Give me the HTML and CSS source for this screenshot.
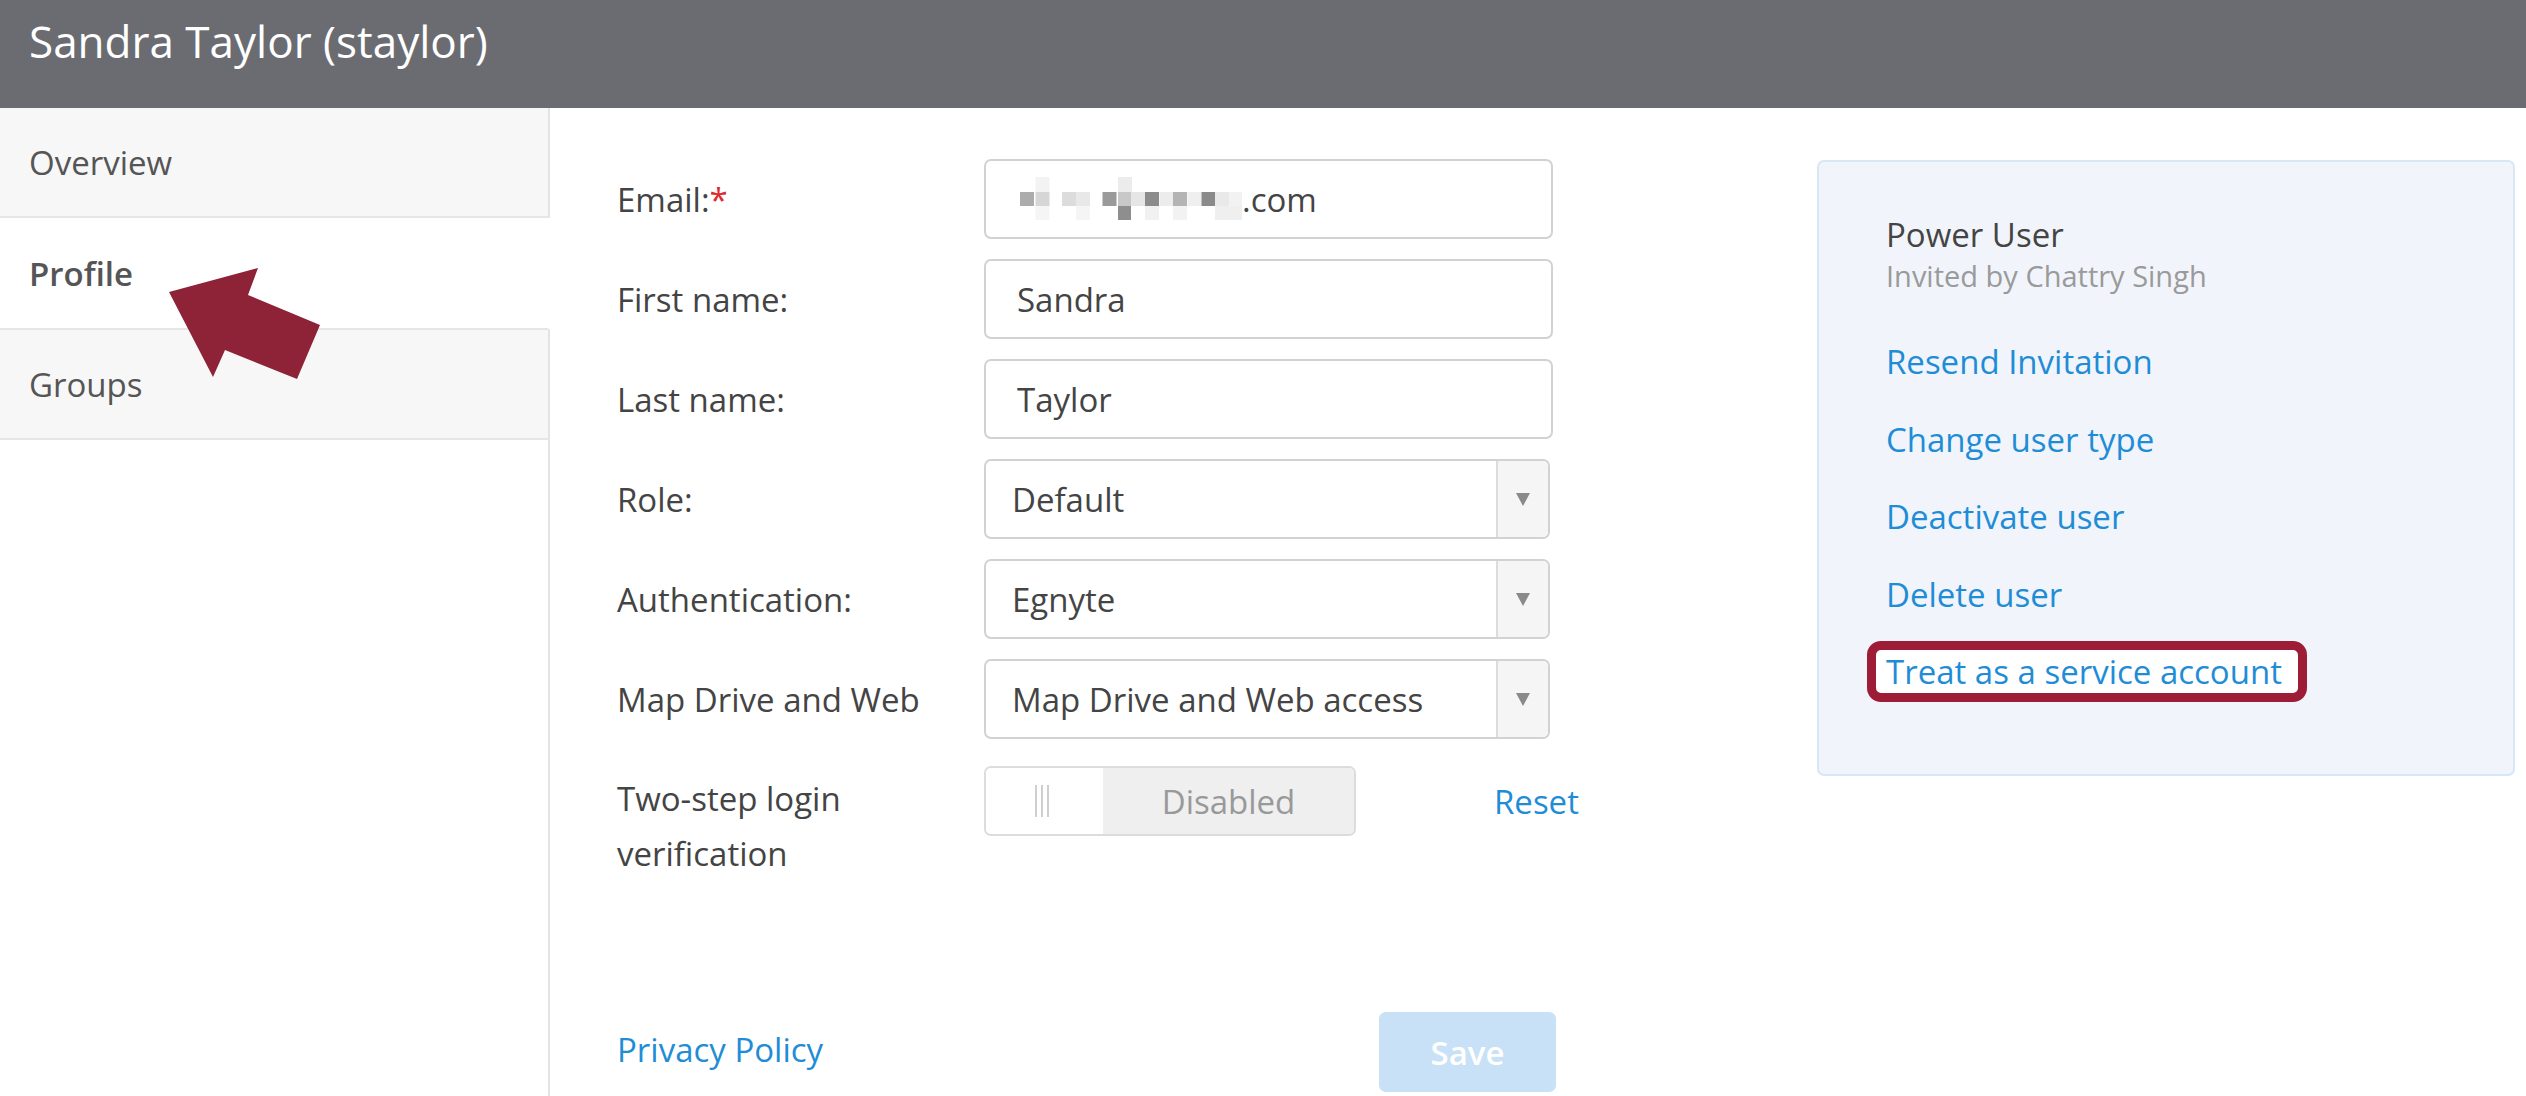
FILE: index.html
```html
<!DOCTYPE html>
<html lang="en">
<head>
  <meta charset="UTF-8">
  <meta name="viewport" content="width=device-width, initial-scale=1.0">
  <title>Sandra Taylor (staylor)</title>
  <link rel="stylesheet" href="styles.css">
</head>
<body>
  <div class="page-title">Sandra Taylor (staylor)</div>

  <div class="layout">
    <div class="sidebar">
      <div class="nav-item">Overview</div>
      <div class="nav-item active">Profile</div>
      <div class="nav-item">Groups</div>
      <div class="nav-fill"></div>
    </div>

    <div class="content">
      <form class="profile-form">
        <div class="form-grid">
          <label>Email:<span class="req">*</span></label>
          <div class="field email-field">
            <!-- blurred address -->
            <svg class="blur" width="222" height="44" viewBox="0 0 222 44">
              <rect x="15.5" y="0" width="14" height="15" fill="#f3f3f3"/>
              <rect x="98" y="0" width="14" height="15" fill="#ececec"/>
              <rect x="0" y="15" width="14" height="14" fill="#acacac"/>
              <rect x="15.5" y="15" width="14" height="14" fill="#d6d6d6"/>
              <rect x="42" y="15" width="14" height="14" fill="#dcdcdc"/>
              <rect x="56" y="15" width="14" height="14" fill="#e8e8e8"/>
              <rect x="82.5" y="15" width="14" height="14" fill="#9a9a9a"/>
              <rect x="98" y="15" width="13" height="14" fill="#c8c8c8"/>
              <rect x="111" y="15" width="14" height="14" fill="#e6e6e6"/>
              <rect x="125" y="15" width="14" height="14" fill="#8c8c8c"/>
              <rect x="139.5" y="15" width="14" height="14" fill="#ececec"/>
              <rect x="153" y="15" width="14" height="14" fill="#b4b4b4"/>
              <rect x="167.5" y="15" width="14" height="14" fill="#efefef"/>
              <rect x="181.5" y="15" width="14" height="14" fill="#8a8a8a"/>
              <rect x="195" y="15" width="14" height="14" fill="#e9e9e9"/>
              <rect x="209" y="15" width="13" height="14" fill="#f2f2f2"/>
              <rect x="15.5" y="29" width="14" height="14" fill="#f5f5f5"/>
              <rect x="56" y="29" width="14" height="14" fill="#f5f5f5"/>
              <rect x="98" y="29" width="13" height="14" fill="#8e8e8e"/>
              <rect x="125" y="29" width="14" height="14" fill="#f1f1f1"/>
              <rect x="153" y="29" width="14" height="14" fill="#f2f2f2"/>
              <rect x="195" y="29" width="27" height="14" fill="#efefef"/>
            </svg><span>.com</span>
          </div>

          <label>First name:</label>
          <div class="field">Sandra</div>

          <label>Last name:</label>
          <div class="field">Taylor</div>

          <label>Role:</label>
          <div class="field select">
            <span class="select-value">Default</span>
            <span class="select-arrow"></span>
          </div>

          <label>Authentication:</label>
          <div class="field select">
            <span class="select-value">Egnyte</span>
            <span class="select-arrow"></span>
          </div>

          <label>Map Drive and Web</label>
          <div class="field select">
            <span class="select-value">Map Drive and Web access</span>
            <span class="select-arrow"></span>
          </div>

          <label class="two-step">Two-step login verification</label>
          <div class="toggle-row">
            <div class="toggle">
              <div class="toggle-handle"><i></i><i></i><i></i></div>
              <div class="toggle-text">Disabled</div>
            </div>
            <a href="#" class="link reset">Reset</a>
          </div>
        </div>

        <div class="form-footer">
          <a href="#" class="link">Privacy Policy</a>
          <button type="button" class="save-btn">Save</button>
        </div>
      </form>

      <div class="user-panel">
        <div class="user-type">Power User</div>
        <div class="invited">Invited by Chattry Singh</div>
        <ul class="actions">
          <li><a href="#" class="link">Resend Invitation</a></li>
          <li><a href="#" class="link">Change user type</a></li>
          <li><a href="#" class="link">Deactivate user</a></li>
          <li><a href="#" class="link">Delete user</a></li>
          <li><a href="#" class="link highlight">Treat as a service account</a></li>
        </ul>
      </div>
    </div>
  </div>

  <svg class="arrow" width="340" height="400" viewBox="0 0 340 400">
    <polygon points="169,292 258,268 248,295 320,325 297,379 225,350 213,377" fill="#8e2237"/>
  </svg>
</body>
</html>
```

FILE: styles.css
```css
* {
  box-sizing: border-box;
}
body {
  margin: 0;
  width: 2526px;
  height: 1096px;
  overflow: hidden;
  position: relative;
  font-family: "Open Sans", "Liberation Sans", sans-serif;
  color: #444;
  background: #fff;
}
.page-title {
  height: 108px;
  padding: 11px 29px 0;
  background: #6b6c71;
  color: #fff;
  font-size: 44px;
}
.layout {
  display: flex;
  height: 988px;
}

/* left nav */
.sidebar {
  width: 550px;
  display: flex;
  flex-direction: column;
}
.nav-item {
  height: 110px;
  display: flex;
  align-items: center;
  padding-left: 29px;
  font-size: 33px;
  color: #555;
  background: #f7f7f7;
  border-right: 2px solid #e4e4e4;
  border-bottom: 2px solid #e6e6e6;
}
.nav-item.active {
  height: 112px;
  background: #fff;
  border-right-color: #fff;
  font-weight: 600;
}
.nav-fill {
  flex: 1;
  border-right: 2px solid #e4e4e4;
}

/* form */
.content {
  flex: 1;
  display: flex;
  align-items: flex-start;
  padding: 51px 0 0 67px;
}
.profile-form {
  width: 939px;
  flex-shrink: 0;
}
.form-grid {
  display: grid;
  grid-template-columns: 367px 569px;
  row-gap: 20px;
  align-items: center;
}
.form-grid label {
  font-size: 33px;
  color: #444;
}
.req {
  color: #e0282a;
}
.field {
  height: 80px;
  border: 2px solid #d2d2d2;
  border-radius: 7px;
  padding-left: 31px;
  font-size: 33px;
  color: #444;
  display: flex;
  align-items: center;
}
.email-field .blur {
  margin-left: 3px;
}
.select {
  width: 566px;
  padding: 0;
}
.select-value {
  flex: 1;
  padding-left: 26px;
}
.select-arrow {
  width: 52px;
  align-self: stretch;
  background: #f5f5f5;
  border-left: 2px solid #dcdcdc;
  border-radius: 0 5px 5px 0;
  display: flex;
  align-items: center;
  justify-content: center;
}
.select-arrow::after {
  content: "";
  border-left: 7px solid transparent;
  border-right: 7px solid transparent;
  border-top: 13px solid #8a8a8a;
}
.form-grid .two-step {
  align-self: start;
  padding-top: 12px;
  line-height: 55px;
}
.toggle-row {
  align-self: start;
  margin-top: 7px;
  display: flex;
  align-items: center;
}
.toggle {
  width: 372px;
  height: 70px;
  flex-shrink: 0;
  border: 2px solid #dcdcdc;
  border-radius: 7px;
  display: flex;
  overflow: hidden;
}
.toggle-handle {
  width: 117px;
  background: #fff;
  display: flex;
  align-items: center;
  justify-content: center;
  gap: 4px;
  padding-right: 6px;
}
.toggle-handle i {
  width: 2px;
  height: 32px;
  background: #cfcfcf;
}
.toggle-text {
  flex: 1;
  background: #efefef;
  color: #999;
  font-size: 33px;
  display: flex;
  align-items: center;
  justify-content: center;
}
.reset {
  margin-left: 138px;
  flex-shrink: 0;
}
.link {
  color: #1f8dd6;
  text-decoration: none;
  font-size: 33px;
}
.form-footer {
  margin-top: 131px;
  display: flex;
  justify-content: space-between;
  align-items: center;
}
.form-footer .link {
  margin-top: -6px;
}
.save-btn {
  width: 177px;
  height: 80px;
  border: none;
  border-radius: 7px;
  background: #c8e1f6;
  color: #fff;
  font-family: inherit;
  font-size: 33px;
  font-weight: 600;
}

/* right panel */
.user-panel {
  margin-left: 261px;
  margin-top: 1px;
  width: 698px;
  height: 616px;
  flex-shrink: 0;
  padding: 51px 0 0 67px;
  background: #f1f5fb;
  border: 2px solid #d8e7f5;
  border-radius: 7px;
}
.user-type {
  font-size: 33px;
  line-height: 44px;
  color: #444;
}
.invited {
  font-size: 29px;
  line-height: 38px;
  color: #9a9a9a;
}
.actions {
  list-style: none;
  margin: 28px 0 0;
  padding: 0;
}
.actions li {
  height: 77.5px;
  display: flex;
  align-items: center;
}
.highlight {
  display: inline-block;
  margin-left: -19px;
  padding: 0 16px 0 10px;
  line-height: 43px;
  border: 9px solid #9d1d36;
  border-radius: 14px;
  background: #fff;
}

/* annotation */
.arrow {
  position: absolute;
  left: 0;
  top: 0;
}
```
